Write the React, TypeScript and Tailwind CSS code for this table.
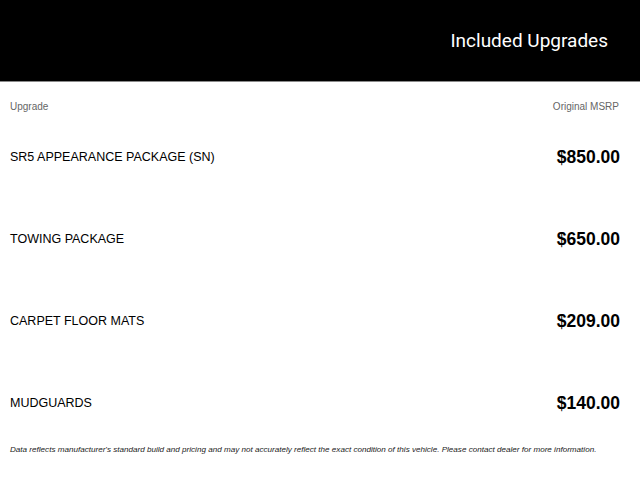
import React from "react";

const items = [
  { name: "SR5 APPEARANCE PACKAGE (SN)", price: "$850.00" },
  { name: "TOWING PACKAGE", price: "$650.00" },
  { name: "CARPET FLOOR MATS", price: "$209.00" },
  { name: "MUDGUARDS", price: "$140.00" },
];

export default function App() {
  return (
    <div className="w-[640px] h-[480px] bg-white overflow-hidden" style={{ fontFamily: "'Liberation Sans', Arial, sans-serif" }}>
      <div className="h-[82px] bg-black border-b border-[#8a8a8a] flex items-center justify-end pr-[32px]">
        <h1 className="text-white text-[19px] font-normal pt-[2px]" style={{ fontFamily: "Roboto, sans-serif" }}>Included Upgrades</h1>
      </div>
      <div className="flex justify-between items-center h-[46px] pt-[3px] pl-[10px] pr-[21px] text-[10px] text-[#666]">
        <span>Upgrade</span>
        <span>Original MSRP</span>
      </div>
      <div className="-mt-[12px]">
        {items.map((it) => (
          <div key={it.name} className="h-[82px] flex items-center justify-between pl-[10px] pr-[20px]">
            <span className="text-[12.5px] text-black">{it.name}</span>
            <span className="text-[17.5px] font-bold text-black">{it.price}</span>
          </div>
        ))}
      </div>
      <p className="pl-[10px] text-[8.1px] italic text-[#222] mt-0">
        Data reflects manufacturer's standard build and pricing and may not accurately reflect the exact condition of this vehicle. Please contact dealer for more information.
      </p>
    </div>
  );
}
